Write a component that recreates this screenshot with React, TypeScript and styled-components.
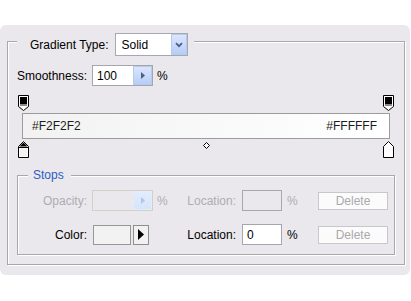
import React from "react";
import styled, { createGlobalStyle } from "styled-components";

const PANEL = "#EAE8EC";

const GlobalStyle = createGlobalStyle`
  html, body { margin: 0; padding: 0; background: #ffffff; }
  body { font-family: "Liberation Sans", Arial, sans-serif; font-size: 12px; color: #000; }
`;

const Panel = styled.div`
  margin-top: 25px;
  width: 410px;
  height: 250px;
  box-sizing: border-box;
  padding: 16px 5px 0 7px;
  background: ${PANEL};
  border-radius: 6px;
`;

const Group = styled.div<{ $h: number; $w?: number; $ml?: number; $mt?: number }>`
  box-sizing: border-box;
  height: ${(p) => p.$h}px;
  width: ${(p) => (p.$w ? `${p.$w}px` : "auto")};
  margin: ${(p) => p.$mt ?? 0}px 0 0 ${(p) => p.$ml ?? 0}px;
  border: 1px solid #a8a8ac;
  box-shadow: inset 1px 1px 0 #ffffff, 1px 1px 0 #ffffff;
  display: flex;
  flex-direction: column;
  align-items: flex-start;
`;

const GroupHeader = styled.div<{ $ml: number; $pl: number; $pr: number; $h: number }>`
  display: flex;
  align-items: center;
  gap: 6px;
  height: ${(p) => p.$h}px;
  margin: -9px 0 0 ${(p) => p.$ml}px;
  padding: 0 ${(p) => p.$pr}px 0 ${(p) => p.$pl}px;
  background: ${PANEL};
  white-space: nowrap;
`;

const Legend = styled.span`
  color: #2c5cc2;
`;

const Select = styled.div`
  box-sizing: border-box;
  width: 73px;
  height: 23px;
  border: 1px solid #a3a9b1;
  background: #ffffff;
  display: flex;
  align-items: center;
  justify-content: space-between;
  padding-left: 6px;
`;

const BlueButton = styled.div<{ $w: number; $dim?: boolean }>`
  box-sizing: border-box;
  width: ${(p) => p.$w}px;
  align-self: stretch;
  display: flex;
  align-items: center;
  justify-content: center;
  border: 1px solid ${(p) => (p.$dim ? "#e3ecfb" : "#b7c9ef")};
  background: ${(p) =>
    p.$dim ? "linear-gradient(#e2ecfc, #d6e4fa)" : "linear-gradient(#dbe6fd, #b7cdf7)"};
`;

const Row = styled.div<{ $mt: number }>`
  display: flex;
  align-items: center;
  height: 21px;
  margin-top: ${(p) => p.$mt}px;
  white-space: nowrap;
`;

const Label = styled.span<{ $w: number; $mr?: number; $dim?: boolean }>`
  flex: none;
  width: ${(p) => p.$w}px;
  margin-right: ${(p) => p.$mr ?? 5}px;
  text-align: right;
  color: ${(p) => (p.$dim ? "#aeadb2" : "#000")};
`;

const Unit = styled.span<{ $w: number; $pl: number; $dim?: boolean }>`
  flex: none;
  box-sizing: border-box;
  width: ${(p) => p.$w}px;
  padding-left: ${(p) => p.$pl}px;
  color: ${(p) => (p.$dim ? "#aeadb2" : "#000")};
`;

const Field = styled.div<{ $w: number; $kind: "normal" | "disabled" | "beige" }>`
  flex: none;
  box-sizing: border-box;
  width: ${(p) => p.$w}px;
  height: 21px;
  display: flex;
  align-items: center;
  justify-content: space-between;
  padding-left: 4px;
  border: 1px solid
    ${(p) => (p.$kind === "beige" ? "#d3d0c4" : p.$kind === "disabled" ? "#a9a9ab" : "#a3a6ad")};
  background: ${(p) => (p.$kind === "normal" ? "#ffffff" : "transparent")};
`;

const ColorPick = styled.div`
  flex: none;
  width: 61px;
  height: 20px;
  display: flex;
  gap: 2px;
`;

const Swatch = styled.div<{ $c: string }>`
  box-sizing: border-box;
  width: 38px;
  margin-left: 1px;
  border: 1px solid #979797;
  background: ${(p) => p.$c};
`;

const ArrowButton = styled.div`
  box-sizing: border-box;
  width: 16px;
  border: 1px solid #8e8e8e;
  background: #f1f1f1;
  display: flex;
  align-items: center;
  justify-content: center;
`;

const DeleteButton = styled.div`
  flex: none;
  box-sizing: border-box;
  width: 70px;
  height: 18px;
  border: 1px solid #c8c8ca;
  background: #fbfbfb;
  color: #a9a9ab;
  display: flex;
  align-items: center;
  justify-content: center;
`;

const GradientBlock = styled.div`
  margin: 9px 0 0 10px;
  width: 376px;
  display: flex;
  flex-direction: column;
`;

const MarkerRow = styled.div<{ $mt: number; $h: number }>`
  display: flex;
  justify-content: space-between;
  align-items: flex-start;
  height: ${(p) => p.$h}px;
  margin-top: ${(p) => p.$mt}px;
`;

const GradientBar = styled.div`
  box-sizing: border-box;
  margin: 2px 4px 0;
  height: 26px;
  border: 1px solid #9c9c9c;
  background: linear-gradient(to right, #f2f2f2, #ffffff);
  display: flex;
  align-items: center;
  justify-content: space-between;
  padding: 0 12px 0 9px;
  color: #1c1c1c;
`;

const MarkerSvg = styled.svg`
  display: block;
  flex: none;
`;

const DiamondSvg = styled.svg`
  display: block;
  flex: none;
  margin-top: 1px;
`;

const TopMarker = () => (
  <MarkerSvg width="11" height="16" viewBox="0 0 11 16">
    <path d="M0.5 0.5 H10.5 V11.5 L5.5 15.5 L0.5 11.5 Z" fill="#ffffff" stroke="#000" />
    <rect x="2" y="2" width="7" height="7" fill="#000" />
    <rect x="2" y="9" width="7" height="2" fill="#8a8a8a" />
  </MarkerSvg>
);

const BottomMarker = ({ color, selected }: { color: string; selected?: boolean }) => (
  <MarkerSvg width="11" height="17" viewBox="0 0 11 17">
    <path d="M5.5 0.5 L10.5 5.5 V16.5 H0.5 V5.5 Z" fill="#ffffff" stroke="#000" />
    {selected && <path d="M5.5 1.5 L9.5 5.5 H1.5 Z" fill="#000" />}
    <rect x="2" y="7" width="7" height="8" fill={color} />
    <rect x="1" y="6" width="9" height="1" fill="#000" opacity={selected ? 1 : 0} />
  </MarkerSvg>
);

const Diamond = () => (
  <DiamondSvg width="7" height="7" viewBox="0 0 7 7">
    <path d="M3.5 0.5 L6.5 3.5 L3.5 6.5 L0.5 3.5 Z" fill="#ffffff" stroke="#000" />
  </DiamondSvg>
);

const Chevron = () => (
  <svg width="8" height="6" viewBox="0 0 8 6">
    <path d="M1 1.2 L4 4.2 L7 1.2" fill="none" stroke="#4a5d85" strokeWidth="1.7" />
  </svg>
);

const SpinTri = ({ color }: { color: string }) => (
  <svg width="4" height="7" viewBox="0 0 4 7">
    <path d="M0 0 L4 3.5 L0 7 Z" fill={color} />
  </svg>
);

const BlackTri = () => (
  <svg width="6" height="11" viewBox="0 0 6 11">
    <path d="M0 0 L6 5.5 L0 11 Z" fill="#000" />
  </svg>
);

export default function App() {
  return (
    <>
      <GlobalStyle />
      <Panel>
        <Group $h={224}>
          <GroupHeader $ml={9} $pl={13} $pr={6} $h={23}>
            <span>Gradient Type:</span>
            <Select>
              <span>Solid</span>
              <BlueButton $w={16}>
                <Chevron />
              </BlueButton>
            </Select>
          </GroupHeader>

          <Row $mt={9}>
            <Label $w={79}>Smoothness:</Label>
            <Field $w={61} $kind="normal">
              <span>100</span>
              <BlueButton $w={19}>
                <SpinTri color="#4d6185" />
              </BlueButton>
            </Field>
            <Unit $w={20} $pl={4}>%</Unit>
          </Row>

          <GradientBlock>
            <MarkerRow $mt={0} $h={16}>
              <TopMarker />
              <TopMarker />
            </MarkerRow>
            <GradientBar>
              <span>#F2F2F2</span>
              <span>#FFFFFF</span>
            </GradientBar>
            <MarkerRow $mt={2} $h={17}>
              <BottomMarker color="#F2F2F2" selected />
              <Diamond />
              <BottomMarker color="#FFFFFF" />
            </MarkerRow>
          </GradientBlock>

          <Group $h={80} $w={378} $ml={9} $mt={17}>
            <GroupHeader $ml={10} $pl={5} $pr={7} $h={16}>
              <Legend>Stops</Legend>
            </GroupHeader>

            <Row $mt={7}>
              <Label $w={69} $dim>Opacity:</Label>
              <Field $w={61} $kind="beige">
                <span />
                <BlueButton $w={19} $dim>
                  <SpinTri color="#b3c4e4" />
                </BlueButton>
              </Field>
              <Unit $w={20} $pl={4} $dim>%</Unit>
              <Label $w={63} $mr={6} $dim>Location:</Label>
              <Field $w={40} $kind="disabled" />
              <Unit $w={36} $pl={5} $dim>%</Unit>
              <DeleteButton>Delete</DeleteButton>
            </Row>

            <Row $mt={13}>
              <Label $w={69}>Color:</Label>
              <ColorPick>
                <Swatch $c="#F2F2F2" />
                <ArrowButton>
                  <BlackTri />
                </ArrowButton>
              </ColorPick>
              <Unit $w={20} $pl={4} />
              <Label $w={63} $mr={6}>Location:</Label>
              <Field $w={40} $kind="normal">
                <span>0</span>
              </Field>
              <Unit $w={36} $pl={5}>%</Unit>
              <DeleteButton>Delete</DeleteButton>
            </Row>
          </Group>
        </Group>
      </Panel>
    </>
  );
}
